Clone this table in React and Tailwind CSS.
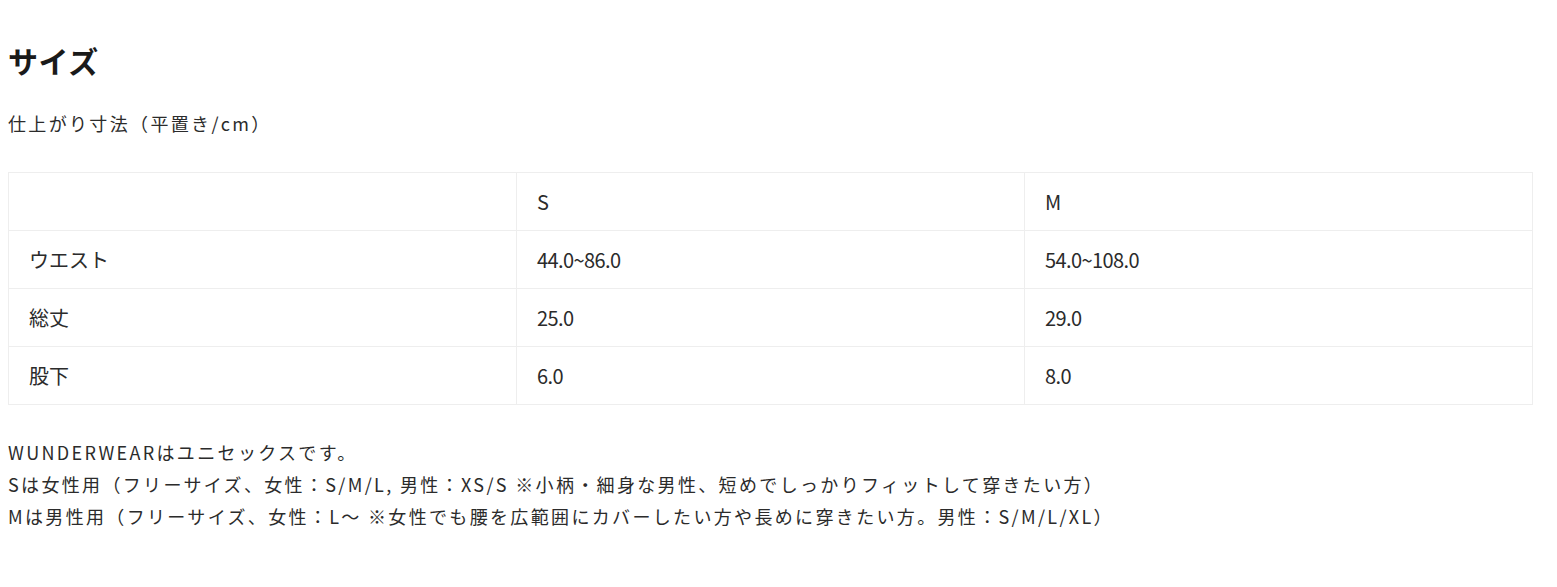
import React from 'react';

const rows = [
    { label: 'ウエスト', s: '44.0~86.0', m: '54.0~108.0' },
    { label: '総丈', s: '25.0', m: '29.0' },
    { label: '股下', s: '6.0', m: '8.0' },
];

export default function App() {
    const font = { fontFamily: '"Noto Sans CJK JP", "Noto Sans", sans-serif' };

    return (
        <div className="min-h-screen bg-white text-[#2b2b2b] px-2 pt-[37px]" style={font}>
            {/* 見出し */}
            <h2 className="text-[30px] font-bold leading-[46px] text-[#1a1a1a] tracking-[0.02em]">サイズ</h2>

            <p className="mt-[24px] text-[18px] leading-[32px] tracking-[0.13em]">仕上がり寸法（平置き/cm）</p>

            {/* サイズ表 */}
            <table className="mt-[33px] w-[1525px] table-fixed border-collapse text-[20px]">
                <tbody>
                    <tr className="h-[58px]">
                        <td className="border border-[#eee] px-5"></td>
                        <td className="border border-[#eee] px-5">S</td>
                        <td className="border border-[#eee] px-5">M</td>
                    </tr>
                    {rows.map((row) => (
                        <tr key={row.label} className="h-[58px]">
                            <td className="border border-[#eee] px-5">{row.label}</td>
                            <td className="border border-[#eee] px-5 tracking-[-0.03em]">{row.s}</td>
                            <td className="border border-[#eee] px-5 tracking-[-0.03em]">{row.m}</td>
                        </tr>
                    ))}
                </tbody>
            </table>

            {/* 補足 */}
            <div className="mt-[31px] text-[18px] leading-[32px] tracking-[0.13em]">
                <p>WUNDERWEARはユニセックスです。</p>
                <p>Sは女性用（フリーサイズ、女性：S/M/L, 男性：XS/S ※小柄・細身な男性、短めでしっかりフィットして穿きたい方）</p>
                <p>Mは男性用（フリーサイズ、女性：L〜 ※女性でも腰を広範囲にカバーしたい方や長めに穿きたい方。男性：S/M/L/XL）</p>
            </div>
        </div>
    );
}
